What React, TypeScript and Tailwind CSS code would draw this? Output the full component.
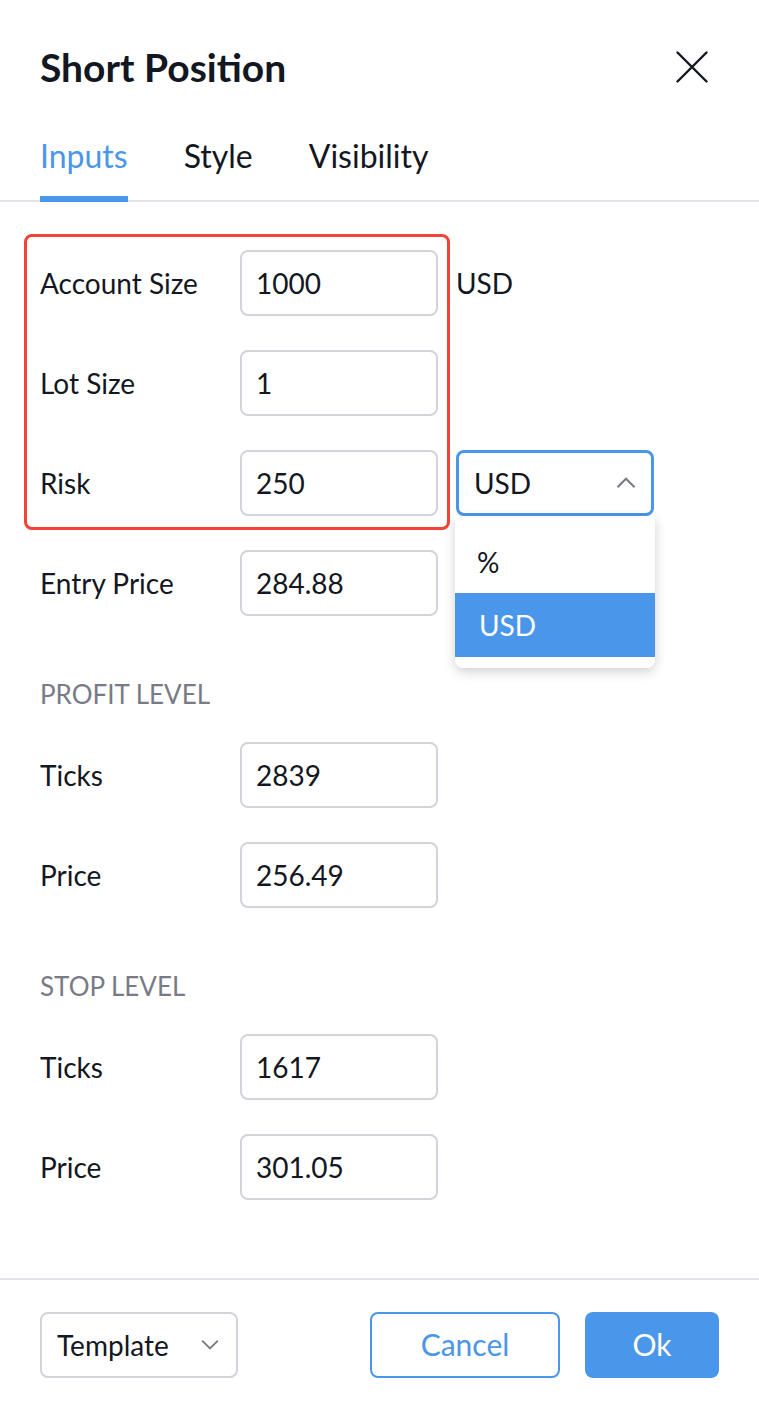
import { useState } from "react"

interface Field {
  label: string
  value: string
}

const BLUE = "#4a96ea"

const TextInput = ({ value }: { value: string }) => (
  <div className="w-[198px] h-[66px] flex items-center px-[14px] border-2 border-[#d1d4dc] rounded-[8px] text-[28px] text-[#131722]">
    {value}
  </div>
)

const Row = ({ field, extra }: { field: Field; extra?: React.ReactNode }) => (
  <div className="flex items-center h-[66px]">
    <div className="w-[200px] text-[28px] text-[#131722]">{field.label}</div>
    <TextInput value={field.value} />
    {extra && <div className="ml-[18px] flex items-center">{extra}</div>}
  </div>
)

const SectionTitle = ({ children }: { children: string }) => (
  <div className="mt-[62px] mb-[32px] h-[32px] flex items-center text-[26px] text-[#787b86] uppercase">{children}</div>
)

export default function App() {
  const [tab, setTab] = useState("Inputs")
  const tabs = ["Inputs", "Style", "Visibility"]

  return (
    <div className="w-full h-[1409px] bg-white flex flex-col font-['Lato',sans-serif]">
      {/* Header */}
      <div className="h-[120px] pt-[14px] px-[40px] flex items-center justify-between">
        <h1 className="text-[39px] font-bold text-[#131722]">Short Position</h1>
        <button className="w-[32px] h-[32px] mr-[11px] text-[#131722]">
          <svg viewBox="0 0 32 32" width="32" height="32" fill="none" stroke="currentColor" strokeWidth="2.4" strokeLinecap="round">
            <path d="M1.5 1.5 L30.5 30.5 M30.5 1.5 L1.5 30.5" />
          </svg>
        </button>
      </div>

      {/* Tabs */}
      <div className="h-[82px] px-[40px] flex gap-[56px] border-b-2 border-[#e0e3eb]">
        {tabs.map((t) => (
          <button
            key={t}
            onClick={() => setTab(t)}
            className={
              t === tab
                ? "h-[82px] -mb-[2px] pb-[4px] flex items-center border-b-[6px] border-[#4a96ea] text-[32px] text-[#4a96ea]"
                : "h-[82px] -mb-[2px] pb-[4px] flex items-center border-b-[6px] border-transparent text-[32px] text-[#131722]"
            }
          >
            {t}
          </button>
        ))}
      </div>

      {/* Body */}
      <div className="flex-1 px-[40px] pt-[48px]">
        <div className="relative flex flex-col gap-[34px]">
          <Row field={{ label: "Account Size", value: "1000" }} extra={<span className="text-[28px] text-[#131722]">USD</span>} />
          <Row field={{ label: "Lot Size", value: "1" }} />
          <Row
            field={{ label: "Risk", value: "250" }}
            extra={
              <div className="relative">
                <div className="w-[198px] h-[66px] flex items-center justify-between pl-[15px] pr-[14px] border-[3px] border-[#4a96ea] rounded-[8px] text-[28px] text-[#131722]">
                  <span>USD</span>
                  <svg viewBox="0 0 24 14" width="22" height="12" fill="none" stroke="#787b86" strokeWidth="2.4">
                    <path d="M2 12 L12 2 L22 12" />
                  </svg>
                </div>
                {/* open dropdown */}
                <div className="absolute left-[-1px] top-[66px] w-[200px] pt-[14px] pb-[11px] bg-white rounded-b-[8px] shadow-[0_4px_12px_rgba(0,0,0,0.18)] z-10">
                  <div className="h-[63px] flex items-center px-[22px] text-[28px] text-[#131722]">%</div>
                  <div className="h-[64px] flex items-center px-[24px] text-[28px] text-white" style={{ backgroundColor: BLUE }}>
                    USD
                  </div>
                </div>
              </div>
            }
          />
          <Row field={{ label: "Entry Price", value: "284.88" }} />
          {/* highlight box */}
          <div className="absolute left-[-16px] top-[-16px] w-[426px] h-[296px] border-[3px] border-[#f44336] rounded-[8px] pointer-events-none" />
        </div>

        <SectionTitle>Profit Level</SectionTitle>
        <div className="flex flex-col gap-[34px]">
          <Row field={{ label: "Ticks", value: "2839" }} />
          <Row field={{ label: "Price", value: "256.49" }} />
        </div>

        <SectionTitle>Stop Level</SectionTitle>
        <div className="flex flex-col gap-[34px]">
          <Row field={{ label: "Ticks", value: "1617" }} />
          <Row field={{ label: "Price", value: "301.05" }} />
        </div>
      </div>

      {/* Footer */}
      <div className="h-[131px] border-t-2 border-[#e0e3eb] px-[40px] flex items-center justify-between">
        <button className="w-[198px] h-[66px] flex items-center justify-between pl-[15px] pr-[16px] border-2 border-[#d1d4dc] rounded-[8px] text-[28px] text-[#131722]">
          <span>Template</span>
          <svg viewBox="0 0 24 14" width="20" height="11" fill="none" stroke="#787b86" strokeWidth="2.4">
            <path d="M2 2 L12 12 L22 2" />
          </svg>
        </button>
        <div className="flex gap-[25px]">
          <button className="w-[190px] h-[66px] border-2 border-[#4a96ea] rounded-[8px] text-[30px] text-[#4a96ea]">Cancel</button>
          <button className="w-[134px] h-[66px] rounded-[8px] text-[30px] text-white" style={{ backgroundColor: BLUE }}>
            Ok
          </button>
        </div>
      </div>
    </div>
  )
}
